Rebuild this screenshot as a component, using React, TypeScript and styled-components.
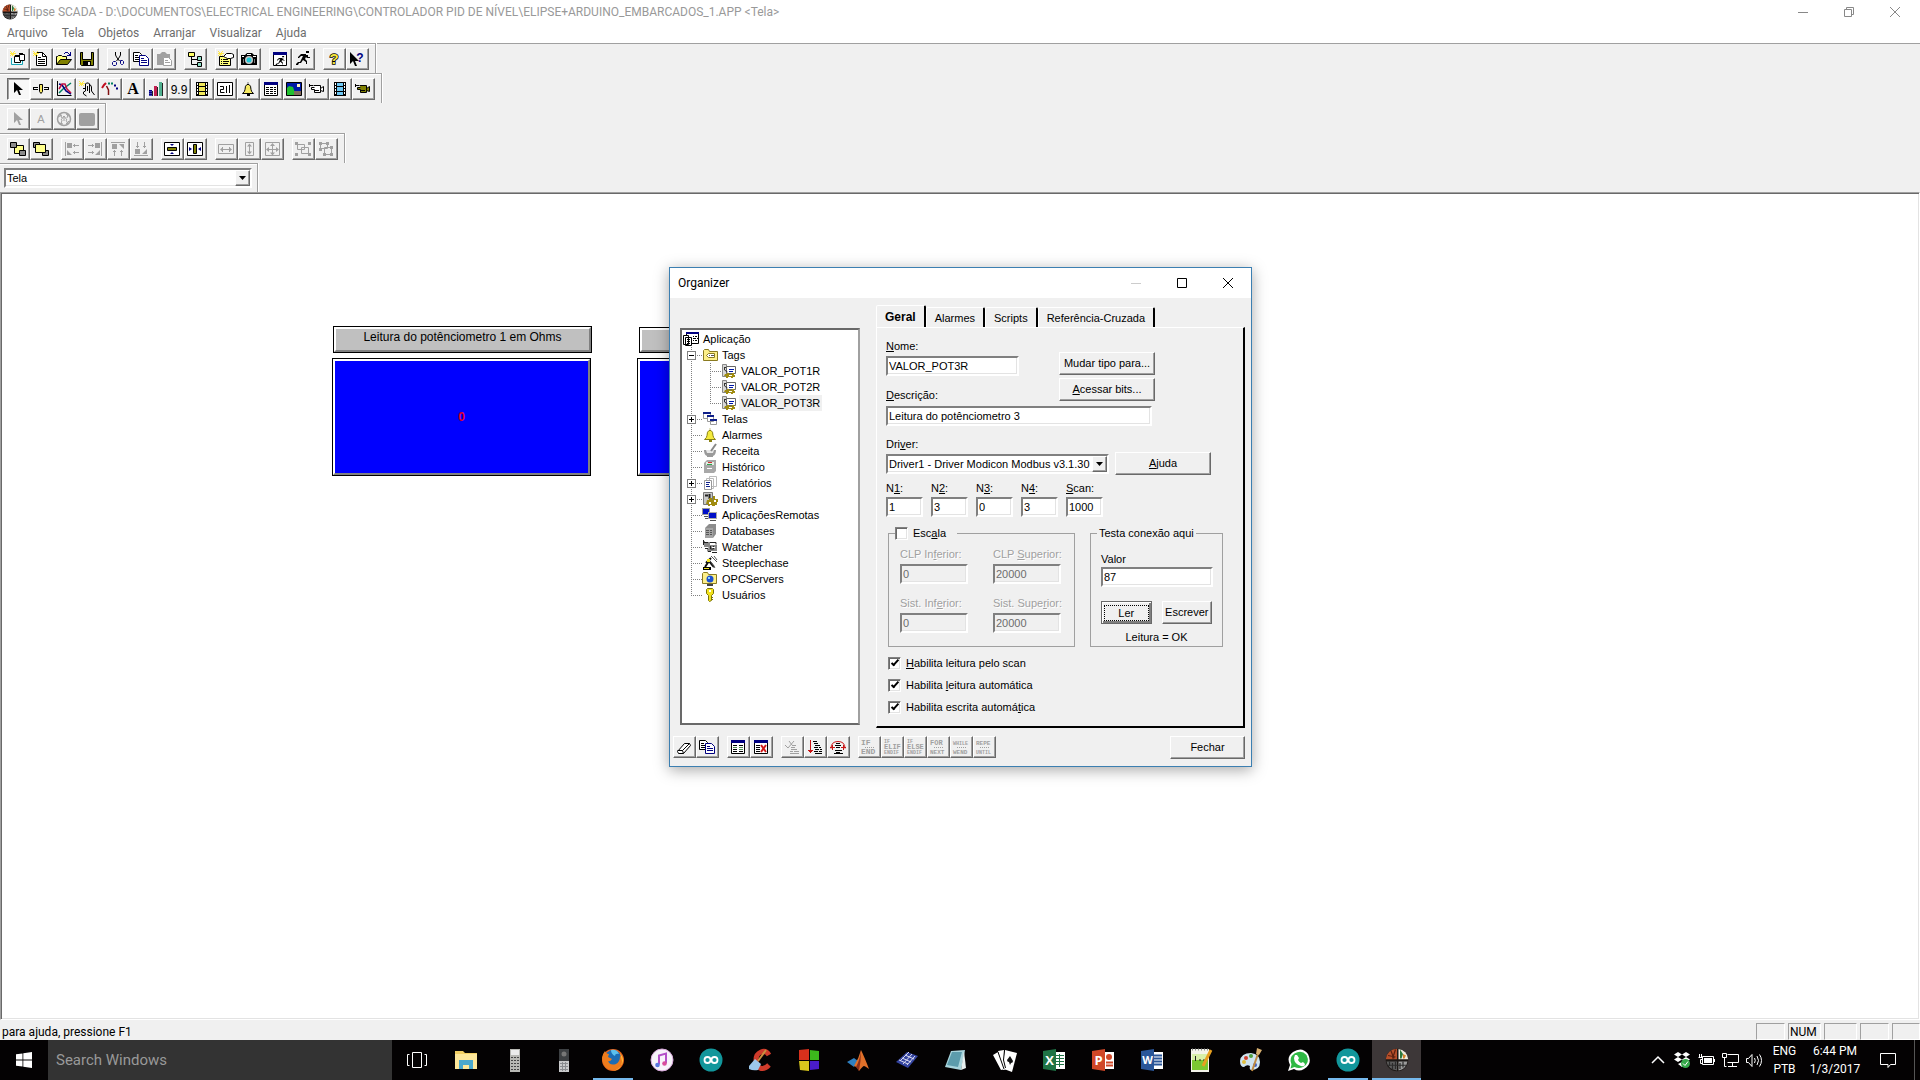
import React from "react";
import styled, { createGlobalStyle, css } from "styled-components";

const UI = `Roboto, "Open Sans", sans-serif`;
const CLASSIC = `"Liberation Sans", Arial, sans-serif`;

const Global = createGlobalStyle`
  *, *::before, *::after { box-sizing: border-box; }
  html, body { margin: 0; padding: 0; background: #f0f0f0; }
  body { font: 12px/16px ${UI}; color: #000; overflow: hidden; }
  button, input, select { font: inherit; color: inherit; margin: 0; border-radius: 0; outline: none; }
  ul { list-style: none; margin: 0; padding: 0; }
`;

/* ---------- drawing helpers ---------- */

const p = (d: string, stroke = "#000", fill = "none", w = 1) => (
  <path d={d} stroke={stroke} fill={fill} strokeWidth={w} />
);
const b = (d: string, fill = "#000") => <path d={d} fill={fill} />;
const SPARK = p("M0 .5h1M4 .5h1M1 1.5h1M3 1.5h1M0 2.5h6M1 3.5h3M0 4.5h1M2 4.5h1M4 4.5h1", "#ffe94a");
const GREY = "#a0a0a0";
const ARROW = "M4 1v11l3-3l2 5h2l-2-5h4z";
const RUNNER = "M11 0h3v2h-3zM6 3h5v1h2v2h2v1h-3l-1-1l-1 2l2 2v3h-1v-2l-3-2l-2 3h-2l-1 2h-2v-1l2-2h2l3-6h-2l-2 2h-1v-1z";
const BELL_OUT = "M8 1.5v1M7 3.5q-2 1-2 5q0 2-2.500 4h11q-2.500-2-2.500-4q0-4-2-5z";

const glyph = (t: string, x: number, y: number, size: number, fill = "#000", font = "Liberation Serif", weight = 700) => (
  <text x={x} y={y} fontSize={size} fontFamily={`"${font}"`} fontWeight={weight} fill={fill} textAnchor="middle">{t}</text>
);

const filmIcon = (c: string) => <>{b("M2 1h12v14h-12z")}{b("M5 2h6v3h-6zM5 6h6v4h-6zM5 11h6v3h-6z", c)}{b("M3 2h1v2h-1zM3 5h1v2h-1zM3 8h1v2h-1zM3 11h1v2h-1zM12 2h1v2h-1zM12 5h1v2h-1zM12 8h1v2h-1zM12 11h1v2h-1z", "#fff")}</>;
const camcorder = (c: string) => <>{p("M1 4.500h3M.5 3v3M4.500 4.500h7v7h-6v-3h-3v-2h3", "#000", c)}{p("M11.500 7.500l3-2v5l-3-1z", "#000", c)}{b("M6 9h4v1h-4z")}</>;
const mono = (t: string, y: number, size: number) => (
  <text x="0" y={y} fontSize={size} fontFamily='"Liberation Mono"' fontWeight="700" fill={GREY}>{t}</text>
);
const codeIcon = (a: string, c: string, n: string, size = 8) => (
  <>
    {n ? mono(a, 4, 5) : mono(a, 6, size)}
    {n ? mono(n, 10, 7) : p("M4 8.500h1M6 8.500h1M8 8.500h1M10 8.500h1M12 8.500h1", GREY)}
    {n ? mono(c, 15, 5) : mono(c, 15, c.length > 4 ? 5 : c.length > 3 ? 6 : size)}
  </>
);
const LOGO = <>
  <circle cx="8" cy="8" r="7.500" fill="#1c1816" />
  {b("M8 7.500h-7.500a7.500 7.500 0 0 1 7.500-7z", "#b64f2a")}
  {b("M9 .6a7.500 7.500 0 0 1 6.500 6.900h-6.500z", "#eeeadc")}
  {p("M2 5l5 1M4 2l2 5M7 1l-2 6", "#5a2010", "none", .8)}
  {b("M10 1l2 3l-1 3h-1z", "#2d7a3c")}
  {b("M12 4l2 1l-1 2h-1z", "#d4842c")}
  {b("M1 9h7v6q-6-1-7-6z", "#5c5c5c")}
  {b("M9 9h6q-1 5-6 6z", "#9b9b9b")}
  {p("M3 9v3M5 10v4M7 9v5M10 10v4M12 9v4M2 11.500h12", "#2c2c2c", "none", .8)}
</>;

const ICONS: Record<string, React.ReactNode> = {
  logo: LOGO,
  newApp: <>{p("M1.500 7v6.500h11V10", "#19a5b8", "#e8ffff")}{p("M4.500 5.500h6v6h-6z", "#000", "#fff")}{p("M9.500 3.500h5v6h-5z", "#000", "#fff")}{p("M4 4.500h5M9 2.500h4")}{SPARK}</>,
  newDoc: <>{p("M3.500 1.500h6l4 4v9h-10z", "#000", "#fff")}{p("M9.500 1.500v4h4M5 6.500h3M5 8.500h7M5 10.500h7M5 12.500h7")}{SPARK}</>,
  open: <>{p("M.5 13.500v-8h1l1-1h3l1 1h4v3", "#000", "#ffff7a")}{p("M.5 13.500l4-5h11l-4 5z", "#000", "#808000")}{p("M8 2.500h1M9 1.500h3M12 2.500h1M13 3.500h1M11 4.500h4M14.500 1v4", "#000080")}</>,
  save: <>{p("M1.500 1.500h13v13h-12l-1-1z", "#000", "#808000")}{b("M4 1h8v7h-8z", "#f0f0f0")}{p("M3.500 1v7.500h9v-7.500")}{b("M4 10h8v5h-8z")}{b("M9 11h2v3h-2z", "#f0f0f0")}</>,
  cut: <>{p("M5.500 1v3l1 2l3 4M10.500 1v3l-1 2l-3 4", "#000")}{p("M3.500 10.500h2l1 1v2l-1 1h-2l-1-1v-2zM10.500 9.500h2l1 1v2l-1 1h-1l-1-1z", "#000080")}</>,
  copy: <>{p("M.5 1.500h6l2 2v7h-8z", "#000", "#fff")}{p("M2 4.500h3M2 6.500h4M2 8.500h4")}{p("M6.500 4.500h6l3 3v7h-9z", "#000080", "#fff")}{p("M8 7.500h3M8 9.500h6M8 11.500h6", "#000080")}</>,
  paste: <>{b("M1 3h3l2-2h3l2 2h3v4h-7v7h-6z", GREY)}{p("M7.500 6.500h5l3 3v5h-8z", GREY, "#fff")}{p("M9 9.500h3M9 11.500h5", GREY)}</>,
  hier: <>{p("M4.500 6v7.500h6M4.500 8.500h6")}{p("M1.500 1.500h6v4h-6z", "#000", "#ffff66")}{p("M10.500 5.500h4v4h-4zM10.500 11.500h4v4h-4z", "#000", "#8fe0c8")}</>,
  props: <>{p("M1.500 5.500h11v9h-11z", "#000", "#ffff7a")}{p("M3 8.500h1M5 8.500h5M3 10.500h1M5 10.500h6M3 12.500h1M5 12.500h5")}{p("M5.500 5.500l3-3h5l2 1v3l-3 1h-3l-2-1z", "#000", "#fff")}{SPARK}</>,
  camera: <>{b("M0 4h4l2-2h5l2 2h3v10h-16z")}{b("M6 3h4v1h-4zM1 5h2v1h-2zM12 5h3v1h-3z", "#fff")}<circle cx="8" cy="9" r="4" fill="#c8c8c8" /><circle cx="8" cy="9" r="2.500" fill="#20c8d8" />{p("M2.500 8v4M13.500 8v4", "#777")}</>,
  runWin: <>{p("M1.500 2.500h13v12h-13z", "#000", "#fff")}{b("M1 1h14v3h-14z", "#000080")}<g transform="translate(3 5) scale(.65)">{b(RUNNER)}</g></>,
  run: b(RUNNER),
  help: <g stroke="#000" strokeWidth="1.500" paintOrder="stroke">{glyph("?", 8, 13, 15, "#f5e63c", "Liberation Sans")}</g>,
  ctxHelp: <>{b("M1 1v12l3-3l2 5h2l-2-5h4z")}{glyph("?", 11, 11, 12, "#000080", "Liberation Sans")}</>,
  arrow: b(ARROW),
  slider: <>{p("M0 6.500h5M11 6.500h5M0 8.500h5M11 8.500h5")}{p("M.5 6v3M15.500 6v3")}{p("M6.500 3.500h3v7l-1.500 2l-1.500-2z", "#000", "#f6e860")}</>,
  trend: <>{p("M1.500 0v14.500h14")}{p("M3 12l4-4l4-3l4-3", "#008060", "none", 1.500)}{p("M3 3l3 1l4 6l5 3", "#000080", "none", 1.500)}{p("M3 8l3-5h3l2 5l4 4", "#c01040", "none", 1.500)}</>,
  touch: <>{p("M6.500 10v-7l1-1h2l1 1v9M8.500 5v5M10.500 4h1l1 2v4l3 4M6.500 10l-2 1v2l3 2M4 7.500h2")}{SPARK}</>,
  gauge: <>{p("M0 7l2-3l2-2", "#c01020", "none", 2)}{p("M6 2.500h2M9 2.500h2", "#008060", "none", 2)}{p("M12 4.500h2M14 7.500h2", "#000080", "none", 2)}{p("M4.500 5l2 4v5", "#801010", "none", 1.500)}</>,
  letter: glyph("A", 8, 13, 16),
  bars: <>{b("M1 9h3v6h-3z", "#4040b0")}{p("M1 9.500h3M1 11.500h3M1 13.500h3", "#000080")}{b("M6 5h3v10h-3z", "#c02050")}{b("M11 1h3v14h-3z", "#50b090")}{p("M14.500 2v13M9.500 6v9M4.500 10v5", "#222")}</>,
  nine: glyph("9.9", 8, 13, 12, "#000", "Liberation Sans", 400),
  film: filmIcon("#f2e95a"),
  filmBlue: filmIcon("#6fc8f4"),
  gauge2: <>{p("M.5 1.500h15v13h-15z", "#000", "#fff")}{p("M3 5.500h3.500v3h-3v3h4M9.500 5v7M12.500 4v8")}</>,
  bell: <>{p(BELL_OUT, "#000", "#f6ea62")}{b("M7 13h3v2h-3z")}</>,
  table: <>{p("M1.500 1.500h13v13h-13z", "#000", "#fff")}{b("M1 1h14v3h-14z", "#000080")}{p("M3 6.500h3M7 6.500h3M11 6.500h2M3 8.500h3M7 8.500h3M11 8.500h2M3 10.500h3M7 10.500h3M11 10.500h2M3 12.500h3M7 12.500h3M11 12.500h2")}</>,
  picture: <>{p("M.5 1.500h15v13h-15z", "#000", "#0018a8")}{b("M1 12V7l2-2l4 1l2 6v2h-8z", "#20c030")}{b("M11 3h3v3h-3z", "#fff4c0")}{b("M8 10h7v4h-7z", "#806a5a")}</>,
  cam: camcorder("#fff"),
  camDark: camcorder("#808000"),
  arrowOff: b(ARROW, GREY),
  letterOff: glyph("A", 8, 12, 11, GREY, "Liberation Sans", 400),
  wheelOff: <><circle cx="8" cy="8" r="6.500" fill="none" stroke={GREY} strokeWidth="1.500" />{p("M8 5v5M5 9l3-4l3 4M2 6l4-2M10 3l4 3M3 12l4 1M10 13l3-3M4 3l2 4M12 3l-1 4M5 13l1-4M12 13l-2-4", GREY)}</>,
  rectOff: <rect x="0" y="2" width="16" height="13" rx="2" fill={GREY} />,
  toBack: <>{p("M4.500 4.500h9v8h-9z", "#000", "#ffff8c")}{p("M.5 1.500h6v5h-6zM9.500 9.500h6v5h-6z", "#000", "#8c8c8c")}</>,
  toFront: <>{p("M.5 1.500h6v5h-6zM9.500 9.500h6v5h-6z", "#000", "#8c8c8c")}{p("M2.500 3.500h10v8h-10z", "#000", "#ffff8c")}</>,
  alL: <>{p("M1.500 1v14M9 4.500h6M9 11.500h6M10.500 3v3M10.500 10v3", GREY)}{b("M3 2h5v5h-5zM3 9l5 5h-5z", GREY)}</>,
  alR: <>{p("M14.500 1v14M1 4.500h6M1 11.500h6M5.500 3v3M5.500 10v3", GREY)}{b("M8 2h5v5h-5zM13 9v5h-5z", GREY)}</>,
  alT: <>{p("M1 1.500h14M4.500 9v6M11.500 9v6M3 10.500h3M10 10.500h3", GREY)}{b("M2 3h5v5h-5zM9 3h5v5z", GREY)}</>,
  alB: <>{p("M1 14.500h14M4.500 1v6M11.500 1v6M3 5.500h3M10 5.500h3", GREY)}{b("M2 8h5v5h-5zM14 8v5h-5z", GREY)}</>,
  ceV: <>{p("M.5 1.500h15v13h-15z", "#000", "#fff")}{p("M3.500 6.500h9v3h-9z", "#000", "#808000")}{b("M6 3h4l-2 2zM6 13h4l-2-2z", "#000080")}</>,
  ceH: <>{p("M.5 1.500h15v13h-15z", "#000", "#fff")}{p("M6.500 3.500h3v9h-3z", "#000", "#808000")}{b("M2 6l3 2l-3 2zM14 6l-3 2l3 2z", "#000080")}</>,
  szH: <>{p("M.5 3.500h15v9h-15zM3 8.500h10M4.500 6v5M11.500 6v5", GREY)}{b("M2 8.500l3-2.500v5zM14 8.500l-3-2.500v5z", GREY)}</>,
  szV: <>{p("M4.500 1.500h8v13h-8zM8.500 3v10", GREY)}{b("M8.500 2.500l2.500 3h-5zM8.500 13.500l2.500-3h-5z", GREY)}</>,
  szB: <>{p("M1.500 1.500h14v13h-14zM3 8.500h11M8.500 3v10", GREY)}{b("M2 8.500l3-2.500v5zM15 8.500l-3-2.500v5zM8.500 2l2.500 3h-5zM8.500 14.500l2.500-3h-5z", GREY)}</>,
  group: <>{p("M2.500 3.500h7v5h-7zM6.500 6.500h7v6h-7z", GREY, "#f0f0f0")}{b("M0 1h3v3h-3zM13 1h3v3h-3zM0 12h3v3h-3zM13 12h3v3h-3z", GREY)}</>,
  ungroup: <>{p("M2.500 2.500h7v5h-7zM6.500 6.500h7v7h-7z", GREY, "#f0f0f0")}{b("M1 1h3v3h-3zM8 1h3v3h-3zM1 7h3v3h-3zM12 5h3v3h-3zM5 12h3v3h-3zM12 12h3v3h-3z", GREY)}</>,
  eraser: <>{p("M1.500 12.500l7-8h5l1 2l-7 8h-5z", "#000", "#fff")}{p("M1.500 11.500h5l7-7M6.500 11.500l1 3")}</>,
  tblAdd: <>{p("M1.500 2.500h13v12h-13z", "#000", "#fff")}{b("M1 1h14v3h-14z", "#000080")}{p("M3 6.500h4M9 6.500h4M3 10.500h4M9 12.500h4M3 12.500h4")}{p("M3 8.500h4M9 8.500h4M9 10.500h4", "#4a8a4a")}</>,
  tblDel: <>{p("M1.500 2.500h13v12h-13z", "#000", "#fff")}{b("M1 1h14v3h-14z", "#000080")}{p("M3 6.500h4M3 8.500h4M3 10.500h4M3 12.500h4")}{p("M8 6l5 7M13 6l-5 7", "#d01818", "none", 2)}</>,
  chkOff: <>{p("M1 6l3 3l6-7M5 2l3 4M8 6.500h4M7 8.500h4M7 10.500h6M6 12.500h3M10 12.500h5M6 14.500h9", GREY)}</>,
  sortRed: <>{p("M3.500 1v13M1 11.500h5M2 12.500h3", "#c81414")}{p("M6 2.500h4M7 4.500h4M8 6.500h5M7 8.500h4M12 8.500h2M8 10.500h4M13 10.500h2M7 12.500h4M12 12.500h3M8 14.500h7")}</>,
  loopRed: <>{p("M1 9.500q0-7 7-7t7 7M0 8.500h5M11 8.500h5M2.500 6v5M13.500 6v5", "#c81414")}{p("M6 4.500h4M5 6.500h6M6 8.500h4M5 11.500h7M4 14.500h9M6 13.500h4")}</>,
  c1: codeIcon("IF", "END", ""),
  c2: codeIcon("IF", "ENDIF", "ELIF"),
  c3: codeIcon("IF", "ENDIF", "ELSE"),
  c4: codeIcon("FOR", "NEXT", "", 7),
  c5: codeIcon("WHILE", "WEND", "", 5),
  c6: codeIcon("REPE", "UNTIL", "", 6),
  tApp: <>{p("M3.500 1.500h12v11h-12z", "#000", "#fff")}{b("M3 1h13v2h-13z", "#000080")}{p("M10 5.500h1M12 5.500h2M10 7.500h3M14 7.500h1M10 9.500h1M12 9.500h2")}{p("M.5 4.500h5v9h-5zM2.500 6.500h6v8h-6z", "#000", "#fff")}{p("M4 8.500h3M4 10.500h3M4 12.500h3")}</>,
  tFolder: <>{p("M1.500 13.500v-10l1-1h4l1 2h8v9z", "#8a7a20", "#fdf08a")}{p("M4.500 8.500l2-2h6v4h-6z", "#8a7a20", "#fff")}{p("M7 8.500h1M9 8.500h3", "#555")}</>,
  tTag: <>{p("M1.500 1.500h4v12h-4z", "#888", "#d8d8d8")}{p("M5.500 3.500h9v7h-9z", "#666", "#fff")}{p("M8 6.500h5M8 8.500h4", "#0018a8")}{p("M3.500 4v3l3 2M3 4.500h2", "#333")}{b("M4 11h2v-1h2v1h3v-1h2v2h1v2h-2v1h-2v-1h-3v1h-2v-2h-2z", "#a08c10")}{b("M8 12h3v1h-3z", "#fff")}</>,
  tWins: <>{p("M1.500 2.500h7v5h-7z", "#999", "#fff")}{p("M5.500 5.500h6v5h-6zM8.500 8.500h6v5h-6z", "#999", "#fff")}{b("M1 1h8v2h-8zM5 4h7v2h-7zM8 8h7v2h-7z", "#10208a")}</>,
  tBell: <>{p(BELL_OUT, "#8a8214", "#f4ea3c")}{b("M7 13h3v2h-3z", "#8a8214")}</>,
  tRecipe: <>{b("M2 7h12q0 5-3 6v1h-6v-1q-3-1-3-6z", "#9a9a9a")}{b("M4 7h8l-1 3h-6z", "#e8e8e8")}{p("M14 1l-5 7", "#888", "none", 2)}</>,
  tHist: <>{b("M2 4l3-3h9v11l-2 2h-10z", "#a8a8a8")}{b("M4 3h8v3h-8z", "#e4efe4")}{b("M6 3h4v1h-4z", "#d03030")}{b("M5 5h5v1h-5z", "#30a050")}{p("M5 9.500h5", "#fff")}</>,
  tReport: <>{p("M7.500 1.500h7v10h-7zM4.500 3.500h7v10h-7z", "#bbb", "#fff")}{p("M2.500 5.500h7v9h-7z", "#999", "#fff")}{p("M4 7.500h4M4 9.500h3M4 11.500h4", "#10208a")}</>,
  tDriver: <>{p("M1.500 1.500h9v12h-9z", "#777", "#c8c8c8")}{p("M3 4.500h3M7.500 3v5", "#222", "none", 2)}{b("M5 9h2v-2h3v2h1v-4h2v3h3v3h-1v3h-2v1h-3v-1h-2v1h-2v-2h-2z", "#a08c10")}{b("M7 11h2v2h-2zM12 9h2v2h-2z", "#fff")}</>,
  tRemote: <>{b("M0 1h8v7h-8z", "#999")}{b("M1 2h6v5h-6z", "#0010c8")}{b("M6 5h9v7h-9z", "#aaa")}{b("M7 6h7v5h-7z", "#0010c8")}{p("M2 9.500h4M3 11.500h3M8 13.500h6", "#555")}</>,
  tDb: <>{b("M3 5l4-4h7v10l-3 4h-8z", "#8c8c8c")}{b("M3 5h8v10h-8z", "#a4a4a4")}{p("M4 7.500h3M8 7.500h2M4 9.500h3M8 9.500h2M4 11.500h3M8 11.500h2", "#555")}</>,
  tWatch: <>{b("M1 2h2v1h5v5h-6v-2h-1zM6 6h9v6h-8z", "#888")}{p("M2 3.500h4M8 3.500h6v2M3 9.500h3v3h3M10 13.500h5M1.500 1v5M8.500 7v3h3v-3", "#222")}{b("M10 8h3v1h-3z", "#fff")}</>,
  tSteep: <>{b("M1 12h8v3h-8z")}{b("M2 13h5v1h-5z", "#f0e020")}{p("M3 12l4-6l5 6M4 8l5-5", "#111", "none", 2)}{b("M5 4h3v3h-3z", "#f0e020")}{p("M9 1l6 6M12 1l3 4M9 7l4 6", "#555")}</>,
  tOpc: <>{p("M.5 12.500v-10l1-1h4l1 2h8v9z", "#8a7a20", "#fdf08a")}<circle cx="8" cy="8" r="3.500" fill="#1a50d0" />{b("M6 6h2v2h-2z", "#8cd0ff")}{b("M5 13h6v2h-6z", "#444")}</>,
  tKey: <>{p("M5.500 1.500h5l1 1v4l-2 2v5l-2 1l-1-1v-5l-2-2v-4z", "#7c7408", "#f2e21c")}{b("M7 3h2v2h-2z", "#fff")}{p("M9 10.500h2M9 12.500h2", "#7c7408")}</>,
};

const TASK_ICONS: Record<string, React.ReactNode> = {
  taskview: <>{p("M7.500 4.500h9v15h-9zM4.500 6.500h-2v11h2M19.500 6.500h2v11h-2", "#fff", "none", 1)}</>,
  explorer: <>{b("M1 3h8l2 2h12v16h-22z", "#f2cf63")}{b("M1 6h22v15h-22z", "#fde79a")}{b("M5 21v-9h14v9h-4v-4h-6v4z", "#4aa8cc")}</>,
  calc: <>{b("M7 1h10v23h-10z", "#b8b8b4")}{b("M8 2h8v5h-8z", "#ececec")}{p("M8 9.500h2M11 9.500h2M14 9.500h2M8 12.500h2M11 12.500h2M14 12.500h2M8 15.500h2M11 15.500h2M14 15.500h2M8 18.500h2M11 18.500h2M14 18.500h2M8 21.500h2M11 21.500h2M14 21.500h2", "#444")}</>,
  phone: <>{b("M7 1h10v23h-10z", "#c9cacc")}{b("M7 1h10v12h-10z", "#3d4043")}<circle cx="12" cy="6" r="2.500" fill="#777" />{p("M8 15.500h8M8 18.500h8M8 21.500h8M10.500 14v9M13.500 14v9", "#8a8c90")}</>,
  firefox: <><circle cx="12" cy="12" r="11" fill="#e8641b" /><circle cx="12" cy="10" r="8" fill="#1d6cb4" />{b("M10 2q6-1 8 4q-4-1-4 2q-4-2-4-6z", "#5cc0ee")}{b("M1 10q1-5 3-7q1 3 4 3l-1 3l4 2q-2 3-4 2q2 5 8 3q4-2 4-8l3 2q0 12-11 12q-9-1-10-12z", "#ee7c1d")}{b("M19 5q6 8 0 14q-4 4-10 4q12 0 12-10q-1-5-2-8z", "#ffc63a")}</>,
  itunes: <><circle cx="12" cy="12" r="11" fill="#f7f3fa" stroke="#d8a8dc" />{p("M9 16.500v-9l7-2v9.500", "#b351c8", "none", 2)}<circle cx="7.500" cy="17" r="2.300" fill="#5a78e0" /><circle cx="14.500" cy="15.500" r="2.300" fill="#d84c9c" /></>,
  arduino: <><circle cx="12" cy="12" r="11.500" fill="#12969b" /><circle cx="8.500" cy="12" r="3" fill="none" stroke="#fff" strokeWidth="1.800" /><circle cx="15.500" cy="12" r="3" fill="none" stroke="#fff" strokeWidth="1.800" /></>,
  ccleaner: <>{p("M21 7q-3-5-8-3t-5 8t4 8t9-3", "#cf3b2b", "none", 5)}{b("M1 18l6-7l6 5l-3 6q-5 1-9-1z", "#9cc8ec")}{p("M10 13l8-11", "#c89040", "none", 2)}</>,
  squares: <>{b("M2 2l10-1v11h-10z", "#d8301c")}{b("M13 2l9 1v9h-9z", "#3cb81c")}{b("M2 13h10v10l-9-1z", "#d8c81c")}{b("M13 13h9v8l-9 1z", "#4a1cc8")}</>,
  matlab: <>{b("M1 14l7-4l4 3l-4 6z", "#2f7fc0")}{b("M8 18q5-8 7-16q3 6 8 19q-4-3-5-3t-5 5q-1-4-5-5z", "#e0702a")}{b("M15 2q-1 10-5 17l3 4q2-10 2-21z", "#8a2f1a")}</>,
  grid: <>{b("M1 14l11-10l11 4l-10 12z", "#3444a0")}{p("M4 12l9 4M7 10l9 4M10 7l9 4M8 16l9-10M5 13l9-9M12 17l8-9", "#dcdcf0")}</>,
  notes: <>{b("M7 3l14-1l-4 20l-16-3z", "#a8d4dc")}{b("M8 4h10l-4 15l-11-2z", "#5c9cac")}{b("M20 3l2 17l-5 2z", "#e8f0f0")}</>,
  cards: <>{b("M0 7l5-3l7 17l-4 1z", "#fff")}{b("M5 3l6-1l3 19l-4 1z", "#fff")}{b("M12 2l12 3l-5 19l-8-3z", "#fff")}{p("M5 4l6 17M11.500 2l-1 10l2 8", "#000")}{b("M17 8l3 5q0 2-2 2l-1 2l-1-3q-2 0-2-2z", "#111")}</>,
  excel: <>{b("M12 4h11v17h-11z", "#fff")}{p("M14 7.500h8M14 10.500h8M14 13.500h8M14 16.500h8M17.500 6v13", "#1f7345")}{b("M1 3l13-2v22l-13-2z", "#1f7345")}{glyph("X", 7.500, 17, 13, "#fff", "Open Sans")}</>,
  ppt: <>{b("M12 4h11v17h-11z", "#fff")}{p("M15 14.500h7M15 17.500h7", "#d04727", "none", 2)}<circle cx="18" cy="9" r="3" fill="#d04727" />{b("M1 3l13-2v22l-13-2z", "#d04727")}{glyph("P", 7.500, 17, 13, "#fff", "Open Sans")}</>,
  word: <>{b("M12 4h11v17h-11z", "#fff")}{p("M14 7.500h8M14 10.500h8M14 13.500h8M14 16.500h8", "#2a5699", "none", 2)}{b("M1 3l13-2v22l-13-2z", "#2a5699")}{glyph("W", 7.500, 16, 11, "#fff", "Open Sans")}</>,
  npp: <>{b("M2 1h18v23h-18z", "#f4f4ea")}{b("M3 6h16v16h-16z", "#7cc832")}{b("M3 6h16v6h-16z", "#d8f0a8")}{p("M6.500 8v5M10 12h2M14 12h2", "#222")}{p("M22 2l-8 16", "#e8a020", "none", 3)}{p("M3 1.500h1M6 1.500h1M9 1.500h1M12 1.500h1M15 1.500h1M18 1.500h1", "#888", "none", 2)}</>,
  paint: <>{b("M2 13q1-8 11-8q9 1 9 9q0 8-9 8q-2-1-1-4q-3-2-6 1q-4 0-4-6z", "#cfe4f0")}<circle cx="8" cy="10" r="2" fill="#d04030" /><circle cx="13" cy="8" r="2" fill="#50a040" /><circle cx="6" cy="14" r="2" fill="#e0c040" /><circle cx="17" cy="17" r="2" fill="#4060c0" />{p("M21 3l-7 20", "#c08a40", "none", 2)}{b("M19 0l5 2l-3 5l-3-1z", "#d8b070")}</>,
  whatsapp: <>{b("M1 23l2-6q-4-8 3-13q9-6 15 2q5 10-4 15q-5 3-10 0z", "#fff")}{b("M3.500 20.500l1-4q-3-7 3-11q7-4 12 1.500q4 8-3.500 12q-4 2-8.500 0z", "#2fb944")}{b("M8 7h2l2 3l-1 2q1 2 3 3l2-1l2 2q0 3-4 2q-7-2-7-8z", "#fff")}</>,
  elipse: <g transform="scale(1.500)">{LOGO}</g>,
};

const Pix = ({ name, size = 16 }: { name: string; size?: number }) => (
  <svg width={size} height={size} viewBox="0 0 16 16" overflow="visible" aria-hidden="true">{ICONS[name]}</svg>
);

/* ---------- shared parts ---------- */

const raised = css`
  background: #f0f0f0;
  border: 1px solid;
  border-color: #fff #696969 #696969 #fff;
  box-shadow: inset -1px -1px 0 #a0a0a0;
`;
const sunken = css`
  border: 2px solid;
  border-color: #808080 #fff #fff #808080;
  box-shadow: inset -1px -1px 0 #e3e3e3;
`;

const Shell = styled.div`
  display: flex;
  flex-direction: column;
  min-height: 100vh;
`;

const TitleBar = styled.header`
  display: flex;
  align-items: center;
  height: 23px;
  padding: 0 2px;
  background: #fff;
  color: #999;
`;
const TitleText = styled.h1`
  flex: 1;
  margin: 0 0 0 5px;
  font-size: 12px;
  line-height: 16px;
  font-weight: 400;
`;
const WinButton = styled.button<{ $w: number; $h: number }>`
  width: ${(q) => q.$w}px;
  height: ${(q) => q.$h}px;
  padding: 0;
  border: 0;
  background: transparent;
  display: grid;
  place-items: center;
`;
const MenuBar = styled.nav`
  display: flex;
  gap: 14px;
  height: 20px;
  padding-left: 7px;
  background: #fff;
  color: #6d6d6d;
`;
const MenuItem = styled.button`
  padding: 0;
  border: 0;
  background: transparent;
`;

const Dock = styled.div`
  display: flex;
  flex-direction: column;
  align-items: flex-start;
`;
const ToolRow = styled.div<{ $wide?: boolean }>`
  display: flex;
  gap: 8px;
  height: ${(q) => (q.$wide ? 29 : 30)}px;
  padding: 4px ${(q) => (q.$wide ? 5 : 6)}px 0 ${(q) => (q.$wide ? 4 : 7)}px;
  border-top: 1px solid #a0a0a0;
  border-right: 1px solid #a0a0a0;
  box-shadow: inset 0 1px 0 #fff, 1px 0 0 #fff;
`;
const DockTop = styled.div`
  height: 1px;
  background: #a0a0a0;
  margin-bottom: -1px;
`;
const Group = styled.div`
  display: flex;
`;
const ToolButton = styled.button<{ $down?: boolean }>`
  width: 23px;
  height: 22px;
  padding: 0 1px 0 0;
  display: grid;
  place-items: center;
  ${raised}
  ${(q) => q.$down && css`
    background: #f8f8f8;
    border-color: #696969 #fff #fff #696969;
    box-shadow: inset 1px 1px 0 #a0a0a0;
  `}
`;

const Combo = styled.div<{ $w: number }>`
  display: grid;
  width: ${(q) => q.$w}px;
  height: 20px;
  background: #fff;
  ${sunken}
  font: 11px/14px ${CLASSIC};
  & > * { grid-area: 1 / 1; }
`;
const ComboSelect = styled.select`
  appearance: none;
  width: 100%;
  min-width: 0;
  height: 16px;
  border: 0;
  padding: 0 14px 0 1px;
  background: transparent;
`;
const ComboArrow = styled.span`
  justify-self: end;
  width: 15px;
  height: 16px;
  display: grid;
  place-items: center;
  pointer-events: none;
  ${raised}
`;

const DropDown = ({ id, width, value, label }: { id: string; width: number; value: string; label?: string }) => (
  <Combo $w={width}>
    <ComboSelect id={id} aria-label={label} defaultValue={value}><option>{value}</option></ComboSelect>
    <ComboArrow><svg width="7" height="4" viewBox="0 0 7 4"><path d="M0 0h7l-3.500 4z" /></svg></ComboArrow>
  </Combo>
);

/* ---------- canvas ---------- */

const Canvas = styled.main`
  position: relative;
  flex: 1;
  background: #fff;
  border: 1px solid;
  border-color: #a0a0a0 #fff #fff #a0a0a0;
  box-shadow: inset 1px 1px 0 #696969, inset -1px -1px 0 #e3e3e3;
`;
const Plate = styled.div<{ $x: number; $y: number; $h: number; $fill: string }>`
  position: absolute;
  left: ${(q) => q.$x}px;
  top: ${(q) => q.$y}px;
  width: 259px;
  height: ${(q) => q.$h}px;
  background: ${(q) => q.$fill};
  border: 3px solid;
  border-color: #fff #808080 #808080 #fff;
  outline: 1px solid #000;
  outline-offset: -1px;
  text-align: center;
  font: 12px/16px ${CLASSIC};
`;
const Reading = styled.output`
  display: grid;
  place-items: center;
  height: 100%;
  color: #e0002a;
  font-weight: 700;
`;

/* ---------- dialog ---------- */

const Dialog = styled.section`
  position: absolute;
  left: 668px;
  top: 74px;
  width: 583px;
  background: #f0f0f0;
  border: 1px solid #3c7fb1;
  box-shadow: 0 3px 14px rgba(0, 0, 0, 0.35);
  font: 11px/14px ${CLASSIC};
`;
const DialogTitle = styled.header`
  display: flex;
  align-items: center;
  height: 30px;
  padding-left: 8px;
  background: #fff;
  font: 12px/16px ${UI};
`;
const DialogName = styled.h2`
  flex: 1;
  margin: 0;
  font-size: 12px;
  font-weight: 400;
`;
const DialogBody = styled.div`
  display: grid;
  grid-template-columns: 180px 1fr;
  column-gap: 16px;
  padding: 7px 6px 0 10px;
`;
const Tree = styled.ul`
  margin-top: 23px;
  margin-bottom: 3px;
  padding: 1px;
  background: #fff;
  border: 2px solid;
  border-color: #696969 #a0a0a0 #696969 #696969;
`;
const TreeRow = styled.li`
  display: flex;
  align-items: center;
  height: 16px;
`;
const Guide = styled.span<{ $v: "none" | "full" | "half"; $h: boolean }>`
  flex: none;
  display: flex;
  align-items: center;
  width: 19px;
  height: 16px;
  padding-left: 4px;
  background-repeat: no-repeat;
  background-image: repeating-linear-gradient(#808080 0 1px, transparent 1px 2px),
    repeating-linear-gradient(90deg, #808080 0 1px, transparent 1px 2px);
  background-position: 8px 0, 8px 8px;
  background-size: 1px ${(q) => ({ none: "0", full: "16px", half: "8px" })[q.$v]}, ${(q) => (q.$h ? 11 : 0)}px 1px;
`;
const Expander = styled.button`
  width: 9px;
  height: 9px;
  padding: 0;
  border: 1px solid #808080;
  background: #fff;
  display: grid;
  place-items: center;
`;
const TreeLabel = styled.span<{ $sel?: boolean }>`
  padding: 0 2px;
  line-height: 16px;
  margin-left: 2px;
  background: ${(q) => (q.$sel ? "#f0f0f0" : "transparent")};
`;

type Node = { t: string; icon: string; level: 0 | 1 | 2; open?: boolean; shut?: boolean; last?: boolean; sel?: boolean };
const NODES: Node[] = [
  { t: "Aplicação", icon: "tApp", level: 0 },
  { t: "Tags", icon: "tFolder", level: 1, open: true },
  { t: "VALOR_POT1R", icon: "tTag", level: 2 },
  { t: "VALOR_POT2R", icon: "tTag", level: 2 },
  { t: "VALOR_POT3R", icon: "tTag", level: 2, last: true, sel: true },
  { t: "Telas", icon: "tWins", level: 1, shut: true },
  { t: "Alarmes", icon: "tBell", level: 1 },
  { t: "Receita", icon: "tRecipe", level: 1 },
  { t: "Histórico", icon: "tHist", level: 1 },
  { t: "Relatórios", icon: "tReport", level: 1, shut: true },
  { t: "Drivers", icon: "tDriver", level: 1, shut: true },
  { t: "AplicaçõesRemotas", icon: "tRemote", level: 1 },
  { t: "Databases", icon: "tDb", level: 1 },
  { t: "Watcher", icon: "tWatch", level: 1 },
  { t: "Steeplechase", icon: "tSteep", level: 1 },
  { t: "OPCServers", icon: "tOpc", level: 1 },
  { t: "Usuários", icon: "tKey", level: 1, last: true },
];

const TabStrip = styled.div`
  display: flex;
  align-items: flex-end;
  height: 22px;
`;
const Tab = styled.button<{ $on?: boolean }>`
  height: ${(q) => (q.$on ? 22 : 20)}px;
  padding: 0 8px;
  background: #f0f0f0;
  border: solid;
  border-width: 1px 2px 0 1px;
  border-color: #fff #000 transparent #fff;
  border-radius: 2px 2px 0 0;
  font-weight: ${(q) => (q.$on ? 700 : 400)};
  font-size: ${(q) => (q.$on ? 12 : 11)}px;
`;
const Panel = styled.div`
  display: flex;
  flex-direction: column;
  height: 401px;
  padding: 11px 9px 0;
  border: solid;
  border-width: 1px 2px 2px 1px;
  border-color: #fff #000 #000 #fff;
`;
const TopGrid = styled.div`
  display: grid;
  grid-template-columns: 133px 96px;
  column-gap: 40px;
  margin-bottom: 4px;
`;
const Stack = styled.div<{ $gap: number; $top?: number; $left?: number }>`
  display: flex;
  flex-direction: column;
  align-items: flex-start;
  gap: ${(q) => q.$gap}px;
  padding-top: ${(q) => q.$top || 0}px;
  padding-left: ${(q) => q.$left || 0}px;
`;
const Row = styled.div<{ $gap: number; $top?: number; $left?: number }>`
  display: flex;
  align-items: center;
  gap: ${(q) => q.$gap}px;
  margin-top: ${(q) => q.$top || 0}px;
  padding-left: ${(q) => q.$left || 0}px;
`;
const Label = styled.label<{ $off?: boolean; $top?: number }>`
  display: block;
  line-height: 14px;
  white-space: nowrap;
  margin-top: ${(q) => q.$top || 0}px;
  ${(q) => q.$off && "color: #a0a0a0; text-shadow: 1px 1px 0 #fff;"}
`;
const TextBox = styled.input<{ $w: number }>`
  width: ${(q) => q.$w}px;
  height: 20px;
  padding: 0 1px 1px;
  background: #fff;
  ${sunken}
  &:disabled { background: #f0f0f0; color: #6d6d6d; }
`;
const PushButton = styled.button<{ $w: number; $default?: boolean }>`
  width: ${(q) => q.$w}px;
  height: 23px;
  padding: 0 0 2px;
  ${raised}
  ${(q) => q.$default && css`
    border-color: #696969;
    box-shadow: inset 1px 1px 0 #fff, inset -2px -2px 0 #808080;
    padding: 2px;
  `}
`;
const FocusRing = styled.span`
  display: block;
  border: 1px dotted #000;
  line-height: 14px;
`;
const Frame = styled.fieldset<{ $w: number }>`
  width: ${(q) => q.$w}px;
  min-width: 0;
  height: 121px;
  margin: 0;
  padding: 0 10px;
  border: 1px solid #a0a0a0;
`;
const Legend = styled.legend<{ $w?: number }>`
  display: flex;
  align-items: center;
  width: ${(q) => (q.$w ? `${q.$w}px` : "auto")};
  height: 14px;
  margin-left: -4px;
  padding: 0 ${(q) => (q.$w ? 0 : 2)}px;
`;
const Tick = styled.input`
  appearance: none;
  flex: none;
  width: 13px;
  height: 13px;
  margin: 0;
  background: #fff;
  border: 1px solid;
  border-color: #808080 #fff #fff #808080;
  box-shadow: inset 1px 1px 0 #696969, inset -1px -1px 0 #e3e3e3;
  display: grid;
  place-items: center;
  &:checked::after {
    content: "";
    width: 8px;
    height: 4px;
    margin-top: -2px;
    border: solid #000;
    border-width: 0 0 2px 2px;
    transform: rotate(-48deg);
  }
`;
const TickLabel = styled.label`
  display: flex;
  align-items: center;
  gap: 5px;
  height: 14px;
`;
const ScaleGrid = styled.div`
  display: grid;
  grid-template-columns: 68px 68px;
  column-gap: 25px;
  row-gap: 12px;
  padding: 7px 1px 0;
`;
const StatusLine = styled.p`
  margin: 6px 0 0;
  text-align: center;
`;
const DialogFoot = styled.footer`
  display: flex;
  gap: 8px;
  padding: 8px 6px 7px 3px;
  & > :last-child { margin-left: auto; }
`;

/* ---------- status bar and task bar ---------- */

const StatusBar = styled.footer`
  display: flex;
  align-items: flex-end;
  gap: 3px;
  height: 20px;
  padding-left: 2px;
`;
const StatusText = styled.span`
  flex: 1;
  line-height: 16px;
`;
const StatusCell = styled.span<{ $w: number }>`
  width: ${(q) => q.$w}px;
  height: 17px;
  line-height: 16px;
  padding-left: 1px;
  border: 1px solid;
  border-color: #a0a0a0 #fff #fff #a0a0a0;
`;
const TaskBar = styled.footer`
  display: flex;
  height: 40px;
  background: #040203;
  color: #fff;
`;
const StartButton = styled.button`
  width: 48px;
  border: 0;
  padding: 0;
  background: transparent;
  display: grid;
  place-items: center;
`;
const SearchBox = styled.input`
  width: 344px;
  padding: 0 8px;
  border: 0;
  background: #333;
  font-size: 15px;
  color: #fff;
  &::placeholder { color: #999; opacity: 1; }
`;
const TaskButton = styled.button<{ $state?: "run" | "active" }>`
  width: 49px;
  border: 0;
  padding: 0;
  display: grid;
  place-items: center;
  background: ${(q) => (q.$state === "active" ? "#3d3738" : "transparent")};
  ${(q) => q.$state && css`
    background-image: linear-gradient(#76b9ed, #76b9ed);
    background-repeat: no-repeat;
    background-position: 50% 100%;
    background-size: ${q.$state === "active" ? 49 : 40}px 2px;
  `}
`;
const Tray = styled.div`
  display: flex;
  align-items: center;
  margin-left: auto;
`;
const TrayButton = styled.button`
  width: 24px;
  height: 40px;
  border: 0;
  padding: 0;
  background: transparent;
  display: grid;
  place-items: center;
`;
const TrayText = styled.div<{ $w: number }>`
  width: ${(q) => q.$w}px;
  text-align: center;
  line-height: 18px;
`;
const Notices = styled(TrayButton)`
  width: 42px;
`;
const Peek = styled.button`
  width: 6px;
  height: 40px;
  margin-left: 5px;
  padding: 0;
  border: 0;
  border-left: 1px solid #555;
  background: transparent;
`;

const TOOLBARS: string[][][] = [
  [["newApp", "newDoc", "open", "save"], ["cut", "copy", "paste"], ["hier"], ["props", "camera"], ["runWin", "run"], ["help", "ctxHelp"]],
  [["arrow", "slider", "trend", "touch", "gauge", "letter", "bars", "nine", "film", "gauge2", "bell", "table", "picture", "cam", "filmBlue", "camDark"]],
  [["arrowOff", "letterOff", "wheelOff", "rectOff"]],
  [["toBack", "toFront"], ["alL", "alR", "alT", "alB"], ["ceV", "ceH"], ["szH", "szV", "szB"], ["group", "ungroup"]],
];
const FOOT_TOOLS = [["eraser", "copy"], ["tblAdd", "tblDel"], ["chkOff", "sortRed", "loopRed"], ["c1", "c2", "c3", "c4", "c5", "c6"]];
const TASKS: [string, ("run" | "active")?][] = [
  ["taskview"], ["explorer"], ["calc"], ["phone"], ["firefox", "run"], ["itunes"], ["arduino"], ["ccleaner"], ["squares"], ["matlab"],
  ["grid"], ["notes"], ["cards"], ["excel"], ["ppt"], ["word"], ["npp"], ["paint"], ["whatsapp"], ["arduino", "run"], ["elipse", "active"],
];

const Tools = ({ groups }: { groups: string[][] }) => (
  <>
    {groups.map((g) => (
      <Group key={g[0]}>
        {g.map((n) => <ToolButton key={n} aria-label={n} $down={n === "arrow"}><Pix name={n} /></ToolButton>)}
      </Group>
    ))}
  </>
);

const Field = ({ id, w, value, off, gap = 2, children }: { id: string; w: number; value: string; off?: boolean; gap?: number; children: React.ReactNode }) => (
  <Stack $gap={gap}>
    <Label htmlFor={id} $off={off}>{children}</Label>
    <TextBox id={id} $w={w} defaultValue={value} disabled={off} />
  </Stack>
);

const OrganizerTree = () => (
  <Tree>
    {NODES.map((n) => (
      <TreeRow key={n.t}>
        {n.level > 0 && (
          <Guide $v={n.level === 1 && n.last ? "half" : "full"} $h={n.level === 1}>
            {(n.open || n.shut) && (
              <Expander aria-label={n.t}>
                <svg width="5" height="5" viewBox="0 0 5 5"><path d={n.shut ? "M0 2h5v1h-5zM2 0h1v5h-1z" : "M0 2h5v1h-5z"} /></svg>
              </Expander>
            )}
          </Guide>
        )}
        {n.level === 2 && <Guide $v={n.last ? "half" : "full"} $h />}
        <Pix name={n.icon} />
        <TreeLabel $sel={n.sel}>{n.t}</TreeLabel>
      </TreeRow>
    ))}
  </Tree>
);

const Organizer = () => (
  <Dialog role="dialog" aria-label="Organizer">
    <DialogTitle>
      <DialogName>Organizer</DialogName>
      <WinButton $w={46} $h={29} aria-label="Minimizar"><svg width="10" height="10">{p("M0 5.500h10", "#ccc")}</svg></WinButton>
      <WinButton $w={46} $h={29} aria-label="Maximizar"><svg width="10" height="10">{p("M.5.5h9v9h-9z")}</svg></WinButton>
      <WinButton $w={46} $h={29} aria-label="Fechar janela"><svg width="10" height="10">{p("M0 0l10 10M10 0l-10 10")}</svg></WinButton>
    </DialogTitle>
    <DialogBody>
      <OrganizerTree />
      <div>
        <TabStrip role="tablist">
          <Tab $on role="tab">Geral</Tab>
          <Tab role="tab">Alarmes</Tab>
          <Tab role="tab">Scripts</Tab>
          <Tab role="tab">Referência-Cruzada</Tab>
        </TabStrip>
        <Panel>
          <TopGrid>
            <div>
              <Field id="nome" w={133} value="VALOR_POT3R" gap={3}><u>N</u>ome:</Field>
              <Label htmlFor="desc" $top={12}><u>D</u>escrição:</Label>
            </div>
            <Stack $gap={3} $top={13}>
              <PushButton $w={96}>Mudar tipo para...</PushButton>
              <PushButton $w={96}><u>A</u>cessar bits...</PushButton>
            </Stack>
          </TopGrid>
          <TextBox id="desc" $w={266} defaultValue="Leitura do potênciometro 3" />
          <Label htmlFor="driver" $top={11}>Dri<u>v</u>er:</Label>
          <Row $gap={6} $top={1}>
            <DropDown id="driver" width={223} value="Driver1 - Driver Modicon Modbus v3.1.30" />
            <PushButton $w={96}><u>A</u>juda</PushButton>
          </Row>
          <Row $gap={8} $top={6}>
            <Field id="n1" w={37} value="1">N<u>1</u>:</Field>
            <Field id="n2" w={37} value="3">N<u>2</u>:</Field>
            <Field id="n3" w={37} value="0">N<u>3</u>:</Field>
            <Field id="n4" w={37} value="3">N<u>4</u>:</Field>
            <Field id="scan" w={37} value="1000"><u>S</u>can:</Field>
          </Row>
          <Row $gap={15} $top={9} $left={2}>
            <Frame $w={187}>
              <Legend $w={62}><TickLabel><Tick type="checkbox" /><span>Esc<u>a</u>la</span></TickLabel></Legend>
              <ScaleGrid>
                <Field id="clpi" w={68} value="0" off gap={3}>CLP In<u>f</u>erior:</Field>
                <Field id="clps" w={68} value="20000" off gap={3}>CLP <u>S</u>uperior:</Field>
                <Field id="sisi" w={68} value="0" off gap={3}>Sist. Inf<u>e</u>rior:</Field>
                <Field id="siss" w={68} value="20000" off gap={3}>Sist. Supe<u>r</u>ior:</Field>
              </ScaleGrid>
            </Frame>
            <Frame $w={133}>
              <Legend>Testa conexão aqui</Legend>
              <Stack $gap={1} $top={12}>
                <Label htmlFor="valor">Valor</Label>
                <TextBox id="valor" $w={112} defaultValue="87" />
              </Stack>
              <Row $gap={10} $top={14}>
                <PushButton $w={51} $default><FocusRing>Ler</FocusRing></PushButton>
                <PushButton $w={51}>Escrever</PushButton>
              </Row>
              <StatusLine>Leitura = OK</StatusLine>
            </Frame>
          </Row>
          <Stack $gap={8} $top={9} $left={2}>
            <TickLabel><Tick type="checkbox" defaultChecked /><span><u>H</u>abilita leitura pelo scan</span></TickLabel>
            <TickLabel><Tick type="checkbox" defaultChecked /><span>Habilita <u>l</u>eitura automática</span></TickLabel>
            <TickLabel><Tick type="checkbox" defaultChecked /><span>Habilita escrita automá<u>t</u>ica</span></TickLabel>
          </Stack>
        </Panel>
      </div>
    </DialogBody>
    <DialogFoot>
      <Tools groups={FOOT_TOOLS} />
      <PushButton $w={75}>Fechar</PushButton>
    </DialogFoot>
  </Dialog>
);

export default function App() {
  return (
    <Shell>
      <Global />
      <TitleBar>
        <Pix name="logo" />
        <TitleText>Elipse SCADA - D:\DOCUMENTOS\ELECTRICAL ENGINEERING\CONTROLADOR PID DE NÍVEL\ELIPSE+ARDUINO_EMBARCADOS_1.APP &lt;Tela&gt;</TitleText>
        <WinButton $w={46} $h={22} aria-label="Minimizar"><svg width="10" height="10">{p("M0 5.500h10", "#888")}</svg></WinButton>
        <WinButton $w={46} $h={22} aria-label="Restaurar"><svg width="10" height="10">{p("M.5 2.500h7v7h-7zM2.500 2v-1.500h7v7h-2", "#888")}</svg></WinButton>
        <WinButton $w={46} $h={22} aria-label="Fechar janela"><svg width="10" height="10">{p("M0 0l10 10M10 0l-10 10", "#888")}</svg></WinButton>
      </TitleBar>
      <MenuBar>
        {["Arquivo", "Tela", "Objetos", "Arranjar", "Visualizar", "Ajuda"].map((m) => <MenuItem key={m}>{m}</MenuItem>)}
      </MenuBar>
      <DockTop />
      <Dock>
        {TOOLBARS.map((g, i) => <ToolRow key={i}><Tools groups={g} /></ToolRow>)}
        <ToolRow $wide><DropDown id="tela" width={248} value="Tela" label="Tela" /></ToolRow>
      </Dock>
      <Canvas>
        <Plate $x={332} $y={133} $h={27} $fill="#c0c0c0">Leitura do potênciometro 1 em Ohms</Plate>
        <Plate $x={331} $y={165} $h={118} $fill="#0000ff"><Reading>0</Reading></Plate>
        <Plate $x={638} $y={134} $h={26} $fill="#c0c0c0" />
        <Plate $x={636} $y={165} $h={118} $fill="#0000ff" />
        <Organizer />
      </Canvas>
      <StatusBar>
        <StatusText>para ajuda, pressione F1</StatusText>
        <StatusCell $w={29} />
        <StatusCell $w={33}>NUM</StatusCell>
        <StatusCell $w={33} />
        <StatusCell $w={29} />
        <StatusCell $w={28} />
      </StatusBar>
      <TaskBar>
        <StartButton aria-label="Iniciar">
          <svg width="16" height="16" viewBox="0 0 16 16">{b("M0 2.300l6.500-.9v6.200h-6.500zM7.300 1.300l8.700-1.300v7.600h-8.700zM0 8.400h6.500v6.200l-6.500-.9zM7.300 8.400h8.700v7.600l-8.700-1.300z", "#fff")}</svg>
        </StartButton>
        <SearchBox placeholder="Search Windows" aria-label="Search Windows" />
        {TASKS.map(([n, s], i) => (
          <TaskButton key={i} aria-label={n} $state={s}><svg width="24" height="24" viewBox="0 0 24 24">{TASK_ICONS[n]}</svg></TaskButton>
        ))}
        <Tray>
          <TrayButton aria-label="Mostrar ícones ocultos"><svg width="16" height="16">{p("M2 11l6-6l6 6", "#fff", "none", 1.5)}</svg></TrayButton>
          <TrayButton aria-label="Dropbox"><svg width="16" height="16">{b("M4 0l4 2.500l-4 2.500l-4-2.500zM12 0l4 2.500l-4 2.500l-4-2.500zM4 5l4 2.500l-4 2.500l-4-2.500zM12 5l4 2.500l-4 2.500l-4-2.500zM4 12l4-2l3 2l-3 3z", "#fff")}<circle cx="11.500" cy="11.500" r="4.500" fill="#35a84a" />{p("M9 11.500l2 2l3-4", "#fff")}</svg></TrayButton>
          <TrayButton aria-label="Bateria"><svg width="17" height="16">{p("M4.500 4.500h11v8h-11zM1.500 2v3M3.500 2v3M.5 5.500h4v2h-2v4h2", "#fff")}{b("M6 6h8v5h-8zM16 7h1v3h-1z", "#fff")}</svg></TrayButton>
          <TrayButton aria-label="Rede"><svg width="17" height="16">{p("M5.500 2.500h11v8h-11M10.500 11v3M6 14.500h9M.5 1.500h4v4h-4zM2.500 6v8.500h2", "#fff")}</svg></TrayButton>
          <TrayButton aria-label="Volume"><svg width="17" height="16">{p("M.5 6.500h2l3.500-4v12l-3.500-4h-2zM8.500 6q1.500 2.500 0 5M11 4q3 4.500 0 9M13.500 2.500q4 6 0 12", "#fff")}</svg></TrayButton>
          <TrayText $w={37}>ENG<br />PTB</TrayText>
          <TrayText $w={64}>6:44 PM<br />1/3/2017</TrayText>
          <Notices aria-label="Notificações"><svg width="17" height="17">{p("M.5 1.500h15v11h-5l-2.500 3v-3h-7.500z", "#fff")}</svg></Notices>
          <Peek aria-label="Mostrar área de trabalho" />
        </Tray>
      </TaskBar>
    </Shell>
  );
}
